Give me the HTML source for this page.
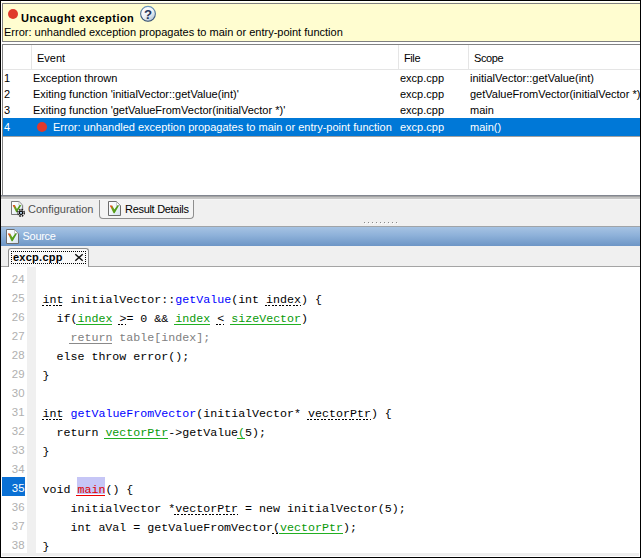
<!DOCTYPE html>
<html><head><meta charset="utf-8">
<style>
html,body{margin:0;padding:0;}
body{width:641px;height:558px;overflow:hidden;background:#fff;position:relative;font-family:"Liberation Sans",sans-serif;font-size:11px;color:#000;}
.a{position:absolute;}
.t{position:absolute;white-space:pre;line-height:14px;height:14px;}
#frame{left:0;top:0;width:641px;height:558px;box-sizing:border-box;border:1px solid #000;border-bottom-width:1px;z-index:50;pointer-events:none;}
#ybox{left:2px;top:3px;width:640px;height:39px;box-sizing:border-box;background:#fffdd0;border:1px solid #808080;}
#ytop{left:1px;top:1px;width:640px;height:2px;background:#ffffe4;}
#ytop2{left:1px;top:1px;width:640px;height:1px;background:#fff;}
.dot{position:absolute;width:10px;height:10px;border-radius:50%;background:#e0392b;}
#tbl{left:2px;top:44px;width:640px;height:152px;box-sizing:border-box;border-left:1px solid #828282;border-top:1px solid #828282;background:#fff;}
#hdrline{left:3px;top:69px;width:638px;height:1px;background:#e5e5e5;}
.vsep{position:absolute;top:45px;width:1px;height:24px;background:#e5e5e5;}
#sel{left:3px;top:118px;width:638px;height:18px;background:#0078d7;}
#selb{left:3px;top:136px;width:638px;height:1px;background:#a0a0a0;}
#split{left:1px;top:195px;width:640px;height:5px;background:linear-gradient(#828690 0,#828690 1px,#a4a4a4 1px,#a4a4a4 2px,#c2c2c2 2px,#c2c2c2 3px,#c6c6c6 3px,#c6c6c6 4px,#f5f5f5 4px,#f5f5f5 5px);z-index:3}
#mid{left:1px;top:197px;width:640px;height:29px;background:#f0f0f0;}
#srcbar{left:1px;top:226px;width:640px;height:20px;background:linear-gradient(#a9c5e4,#8fb2da 45%,#6d96c6 100%);}
#tabstrip{left:1px;top:246px;width:640px;height:21px;background:#f0f0f0;}
#code{left:1px;top:267px;width:639px;height:290px;background:#fff;}
#hscroll{left:2px;top:553px;width:637px;height:3px;background:#eee;}
#gut{left:27px;top:267px;width:9px;height:286px;background:#f0f0f0;}
.ln{position:absolute;left:3px;width:21.5px;text-align:right;color:#b0b0b0;font-size:11.4px;line-height:19px;height:19px;}
.cl{position:absolute;left:42.5px;white-space:pre;font-family:"Liberation Mono",monospace;font-size:11.65px;line-height:19px;height:19px;color:#000;}
u{text-decoration:none;display:inline-block;position:relative;height:19px;line-height:19px;vertical-align:top;}
u::after{content:"";position:absolute;left:-1px;right:0;top:15px;height:1px;}
.dk::after{background:repeating-linear-gradient(90deg,#000 0,#000 2px,transparent 2px,transparent 3.5px);right:0;}
.gu{color:#089a08;}
.gu::after{background:#22b022;height:1.3px;}
.gru::after{background:#8a8a8a;}
.ru{color:#dd0000;}
.ru::after{background:#ee0000;height:1.4px;}
.mainhl{background:#c8b4f0;}
.b{color:#0000ff}.g{color:#008000}.gr{color:#808080}.r{color:#c00000}
</style></head><body>
<svg width="0" height="0" style="position:absolute"><defs>
<linearGradient id="pg" x1="0" y1="0" x2="1" y2="1"><stop offset="0" stop-color="#ffffff"/><stop offset="0.5" stop-color="#f2f6fa"/><stop offset="1" stop-color="#cfe0ee"/></linearGradient>
<linearGradient id="ck" x1="0" y1="0" x2="1" y2="0.35"><stop offset="0" stop-color="#c81400"/><stop offset="0.22" stop-color="#e06010"/><stop offset="0.38" stop-color="#6aa020"/><stop offset="1" stop-color="#3f9a14"/></linearGradient>
<g id="pgicon"><path d="M0.5 0.5 H8.5 L12.5 4.5 V14.5 H0.5Z" fill="url(#pg)" stroke="#6c6c6c"/><path d="M8.5 0.8 V4.5 H12.2Z" fill="#ffffff" stroke="#a8a8a8" stroke-width="0.6"/><path d="M1.8 4.6 L4.2 4.4 L6.4 8.6 L9.2 4.4 L11 4.6 L6.6 12.2 L5.6 12.2 Z" fill="url(#ck)"/></g>
</defs></svg>
<div class="a" id="ytop"></div><div class="a" id="ytop2"></div>
<div class="a" id="ybox"></div>
<div class="dot" style="left:8px;top:9px"></div>
<div class="t" style="left:21px;top:11px;font-weight:bold;font-size:11px;letter-spacing:0.45px">Uncaught exception</div>
<svg class="a" style="left:139px;top:5px" width="18" height="18" viewBox="0 0 18 18"><defs><linearGradient id="hg" x1="0.2" y1="0.1" x2="0.8" y2="0.95"><stop offset="0" stop-color="#ffffff"/><stop offset="0.5" stop-color="#eef2f6"/><stop offset="1" stop-color="#b4c6d8"/></linearGradient><linearGradient id="hb" x1="0" y1="0" x2="0" y2="1"><stop offset="0" stop-color="#6a98bc"/><stop offset="1" stop-color="#2c466a"/></linearGradient></defs><circle cx="9" cy="8.8" r="7.4" fill="url(#hg)" stroke="url(#hb)" stroke-width="1.1"/><text x="9" y="13.6" text-anchor="middle" font-family="Liberation Sans, sans-serif" font-weight="bold" font-size="13.2" fill="#26365a">?</text></svg>
<div class="t" style="left:4px;top:25px">Error: unhandled exception propagates to main or entry-point function</div>
<div class="a" id="tbl"></div>
<div class="a" id="hdrline"></div>
<div class="vsep" style="left:31px"></div><div class="vsep" style="left:398px"></div><div class="vsep" style="left:468px"></div>
<div class="t" style="left:37px;top:51px">Event</div>
<div class="t" style="left:404px;top:51px;letter-spacing:-0.4px">File</div>
<div class="t" style="left:474px;top:51px;letter-spacing:-0.4px">Scope</div>
<div class="a" id="sel"></div><div class="a" id="selb"></div>
<div class="t" style="left:4px;top:71px">1</div><div class="t" style="left:33px;top:71px">Exception thrown</div><div class="t" style="left:400px;top:71px">excp.cpp</div><div class="t" style="left:470px;top:71px">initialVector::getValue(int)</div>
<div class="t" style="left:4px;top:87px">2</div><div class="t" style="left:33px;top:87px">Exiting function 'initialVector::getValue(int)'</div><div class="t" style="left:400px;top:87px">excp.cpp</div><div class="t" style="left:470px;top:87px">getValueFromVector(initialVector *)</div>
<div class="t" style="left:4px;top:103px">3</div><div class="t" style="left:33px;top:103px">Exiting function 'getValueFromVector(initialVector *)'</div><div class="t" style="left:400px;top:103px">excp.cpp</div><div class="t" style="left:470px;top:103px">main</div>
<div class="t" style="left:4px;top:119.5px;color:#fff">4</div><div class="dot" style="left:37px;top:122px"></div><div class="t" style="left:53px;top:119.5px;color:#fff">Error: unhandled exception propagates to main or entry-point function</div><div class="t" style="left:400px;top:119.5px;color:#fff">excp.cpp</div><div class="t" style="left:470px;top:119.5px;color:#fff">main()</div>
<div class="a" id="split"></div>
<div class="a" id="mid"></div>
<svg class="a" style="left:11px;top:201px" width="16" height="17" viewBox="0 0 16 17"><g transform="scale(0.93)"><use href="#pgicon"/></g><circle cx="10" cy="11.8" r="3.9" fill="#fff"/><circle cx="10" cy="11.8" r="3.3" fill="none" stroke="#000" stroke-width="1.3" stroke-dasharray="1.7 0.89"/><circle cx="10" cy="11.8" r="1.7" fill="#b4d4ee" stroke="#000" stroke-width="1.1"/></svg>
<div class="t" style="left:28px;top:202px;color:#505050">Configuration</div>
<div class="a" style="left:99px;top:196px;width:95px;height:23px;box-sizing:border-box;border:1px solid #8e8e8e;border-top:none;border-radius:0 0 4px 4px;background:#f4f4f4"></div>
<svg class="a" style="left:108px;top:201px" width="13" height="15" viewBox="0 0 13 15"><use href="#pgicon"/></svg>
<div class="t" style="left:125px;top:202px;letter-spacing:-0.3px">Result Details</div>
<i class="a" style="left:364px;top:222px;width:1px;height:1px;background:#8a8a8a"></i><i class="a" style="left:365px;top:223px;width:1px;height:1px;background:#fff"></i><i class="a" style="left:368px;top:222px;width:1px;height:1px;background:#8a8a8a"></i><i class="a" style="left:369px;top:223px;width:1px;height:1px;background:#fff"></i><i class="a" style="left:372px;top:222px;width:1px;height:1px;background:#8a8a8a"></i><i class="a" style="left:373px;top:223px;width:1px;height:1px;background:#fff"></i><i class="a" style="left:376px;top:222px;width:1px;height:1px;background:#8a8a8a"></i><i class="a" style="left:377px;top:223px;width:1px;height:1px;background:#fff"></i><i class="a" style="left:380px;top:222px;width:1px;height:1px;background:#8a8a8a"></i><i class="a" style="left:381px;top:223px;width:1px;height:1px;background:#fff"></i><i class="a" style="left:384px;top:222px;width:1px;height:1px;background:#8a8a8a"></i><i class="a" style="left:385px;top:223px;width:1px;height:1px;background:#fff"></i><i class="a" style="left:388px;top:222px;width:1px;height:1px;background:#8a8a8a"></i><i class="a" style="left:389px;top:223px;width:1px;height:1px;background:#fff"></i><i class="a" style="left:392px;top:222px;width:1px;height:1px;background:#8a8a8a"></i><i class="a" style="left:393px;top:223px;width:1px;height:1px;background:#fff"></i><i class="a" style="left:396px;top:222px;width:1px;height:1px;background:#8a8a8a"></i><i class="a" style="left:397px;top:223px;width:1px;height:1px;background:#fff"></i>
<div class="a" id="srcbar"></div><div class="a" style="left:1px;top:226px;width:640px;height:1px;background:#a0a4a8"></div>
<svg class="a" style="left:6px;top:229px" width="13" height="15" viewBox="0 0 13 15"><use href="#pgicon"/></svg>
<div class="t" style="left:22.5px;top:229px;color:#fff;letter-spacing:-0.28px">Source</div>
<div class="a" id="tabstrip"></div>
<div class="a" style="left:1px;top:266px;width:639px;height:1px;background:#a4a4a4"></div>
<div class="a" id="code"></div>
<div class="a" id="gut"></div><div class="a" id="hscroll"></div>
<div class="a" style="left:8px;top:248px;width:81px;height:19px;box-sizing:border-box;border:1px solid #8e8e8e;border-bottom:none;border-radius:3px 3px 0 0;background:#fafafa"></div>
<div class="a" style="left:11px;top:251px;width:75px;height:13px;box-sizing:border-box;border:1px dotted #000"></div>
<div class="t" style="left:13px;top:250px;font-weight:bold;letter-spacing:0.25px">excp.cpp</div>
<svg class="a" style="left:74px;top:253px" width="10" height="9" viewBox="0 0 10 9"><path d="M1.3 1.3 L8.7 7.7 M8.7 1.3 L1.3 7.7" stroke="#111" stroke-width="1.5" fill="none"/></svg>
<div id="lines">
<div class="ln" style="top:270px">24</div>
<div class="ln" style="top:289px">25</div>
<div class="cl" style="top:290px"><u class="dk">int</u> initialVector::<span class="b">getValue</span>(int <u class="dk">index</u>) {</div>
<div class="ln" style="top:308px">26</div>
<div class="cl" style="top:309px">  if(<u class="gu">index</u> <u class="dk">&gt;</u>= 0 &amp;&amp; <u class="gu">index</u> <u class="dk">&lt;</u> <u class="gu">sizeVector</u>)</div>
<div class="ln" style="top:327px">27</div>
<div class="cl" style="top:328px"><span class="gr">    <u class="gru">return</u> table[index];</span></div>
<div class="ln" style="top:346px">28</div>
<div class="cl" style="top:347px">  else throw error();</div>
<div class="ln" style="top:365px">29</div>
<div class="cl" style="top:366px">}</div>
<div class="ln" style="top:384px">30</div>
<div class="ln" style="top:403px">31</div>
<div class="cl" style="top:404px"><u class="dk">int</u> <span class="b">getValueFromVector</span>(initialVector* <u class="dk">vectorPtr</u>) {</div>
<div class="ln" style="top:422px">32</div>
<div class="cl" style="top:423px">  return <u class="gu">vectorPtr</u>-&gt;getValue<u class="gu">(</u>5);</div>
<div class="ln" style="top:441px">33</div>
<div class="cl" style="top:442px">}</div>
<div class="ln" style="top:460px">34</div>
<div class="a" style="left:2px;top:477px;width:23px;height:19px;background:#0a70d4"></div><div class="a" style="left:77px;top:477px;width:28px;height:17px;background:#c6c6f6"></div>
<div class="ln" style="top:479px;color:#fff">35</div>
<div class="cl" style="top:480px">void <u class="ru">main</u>() {</div>
<div class="ln" style="top:498px">36</div>
<div class="cl" style="top:499px">    initialVector *<u class="dk">vectorPtr</u> = new initialVector(5);</div>
<div class="ln" style="top:517px">37</div>
<div class="cl" style="top:518px">    int aVal = getValueFromVector<u class="dk">(</u><u class="gu">vectorPtr</u>);</div>
<div class="ln" style="top:536px">38</div>
<div class="cl" style="top:537px">}</div>
</div>
<div class="a" id="frame"></div>
</body></html>
